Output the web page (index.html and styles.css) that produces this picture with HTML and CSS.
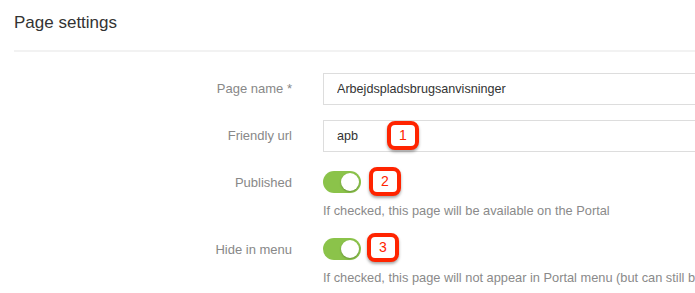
FILE: index.html
```html
<!DOCTYPE html>
<html lang="en">
  <head>
    <meta charset="UTF-8" />
    <title>Page settings</title>
    <link rel="stylesheet" href="styles.css">
  </head>
  <body>
    <div class="panel">
      <div class="panel-head">
        <h2>Page settings</h2>
      </div>
      <div class="form">
        <div class="row">
          <label class="label">Page name *</label>
          <div class="field">
            <input class="text-input" type="text" value="Arbejdspladsbrugsanvisninger" />
          </div>
        </div>
        <div class="row">
          <label class="label">Friendly url</label>
          <div class="field">
            <input class="text-input" type="text" value="apb" />
            <span class="badge badge-1">1</span>
          </div>
        </div>
        <div class="row row-switch">
          <label class="label">Published</label>
          <div class="field">
            <span class="switch"><span class="knob"></span></span>
            <span class="badge badge-2">2</span>
            <p class="help">If checked, this page will be available on the Portal</p>
          </div>
        </div>
        <div class="row row-switch row-last">
          <label class="label">Hide in menu</label>
          <div class="field">
            <span class="switch"><span class="knob"></span></span>
            <span class="badge badge-3">3</span>
            <p class="help">If checked, this page will not appear in Portal menu (but can still be</p>
          </div>
        </div>
      </div>
    </div>
  </body>
</html>
```

FILE: styles.css
```css
* {
  padding: 0;
  margin: 0;
  box-sizing: border-box;
}
body {
  font-family: "Liberation Sans", Arial, sans-serif;
  background: #fff;
  color: #333;
  overflow: hidden;
}
.panel {
  padding-left: 14px;
  overflow: hidden;
}
.panel-head {
  height: 52px;
  border-bottom: 2px solid #f2f2f2;
  padding-top: 12px;
}
.panel-head h2 {
  font-size: 17px;
  font-weight: normal;
  line-height: 22px;
  color: #333;
}
.form {
  padding-top: 21px;
}
.row {
  display: grid;
  grid-template-columns: 278px 1fr;
  column-gap: 31px;
  margin-bottom: 15px;
}
.label {
  text-align: right;
  font-size: 13px;
  color: #888;
  line-height: 32px;
}
.field {
  position: relative;
  white-space: nowrap;
  overflow: visible;
}
.text-input {
  display: block;
  width: calc(100% + 20px);
  height: 32px;
  border: 1px solid #ddd;
  padding: 0 13px;
  font-family: "Liberation Sans", Arial, sans-serif;
  font-size: 12.6px;
  color: #333;
  outline: none;
}
.row-switch {
  margin-top: 19px;
  margin-bottom: 0;
}
.row-switch .label {
  line-height: 23px;
}
.row-last {
  margin-top: 20px;
}
.switch {
  display: block;
  position: relative;
  width: 38px;
  height: 22px;
  border-radius: 11px;
  background: #8bc34a;
}
.knob {
  position: absolute;
  top: 2px;
  right: 2px;
  width: 18px;
  height: 18px;
  border-radius: 50%;
  background: #fff;
  box-shadow: 0 1px 2px rgba(0, 0, 0, 0.25);
}
.help {
  margin-top: 10px;
  font-size: 12.8px;
  line-height: 15px;
  color: #8a8a8a;
}
.badge {
  position: absolute;
  width: 32px;
  height: 29px;
  border: 4px solid #ff2400;
  border-radius: 8px;
  background: #fff;
  color: #ff2400;
  font-size: 14px;
  line-height: 21px;
  text-align: center;
  box-shadow: 0 2px 3px rgba(0, 0, 0, 0.35);
}
.badge-1 {
  left: 64px;
  top: 1px;
}
.badge-2 {
  left: 46px;
  top: -4px;
}
.badge-3 {
  left: 44px;
  top: -5px;
}
```
